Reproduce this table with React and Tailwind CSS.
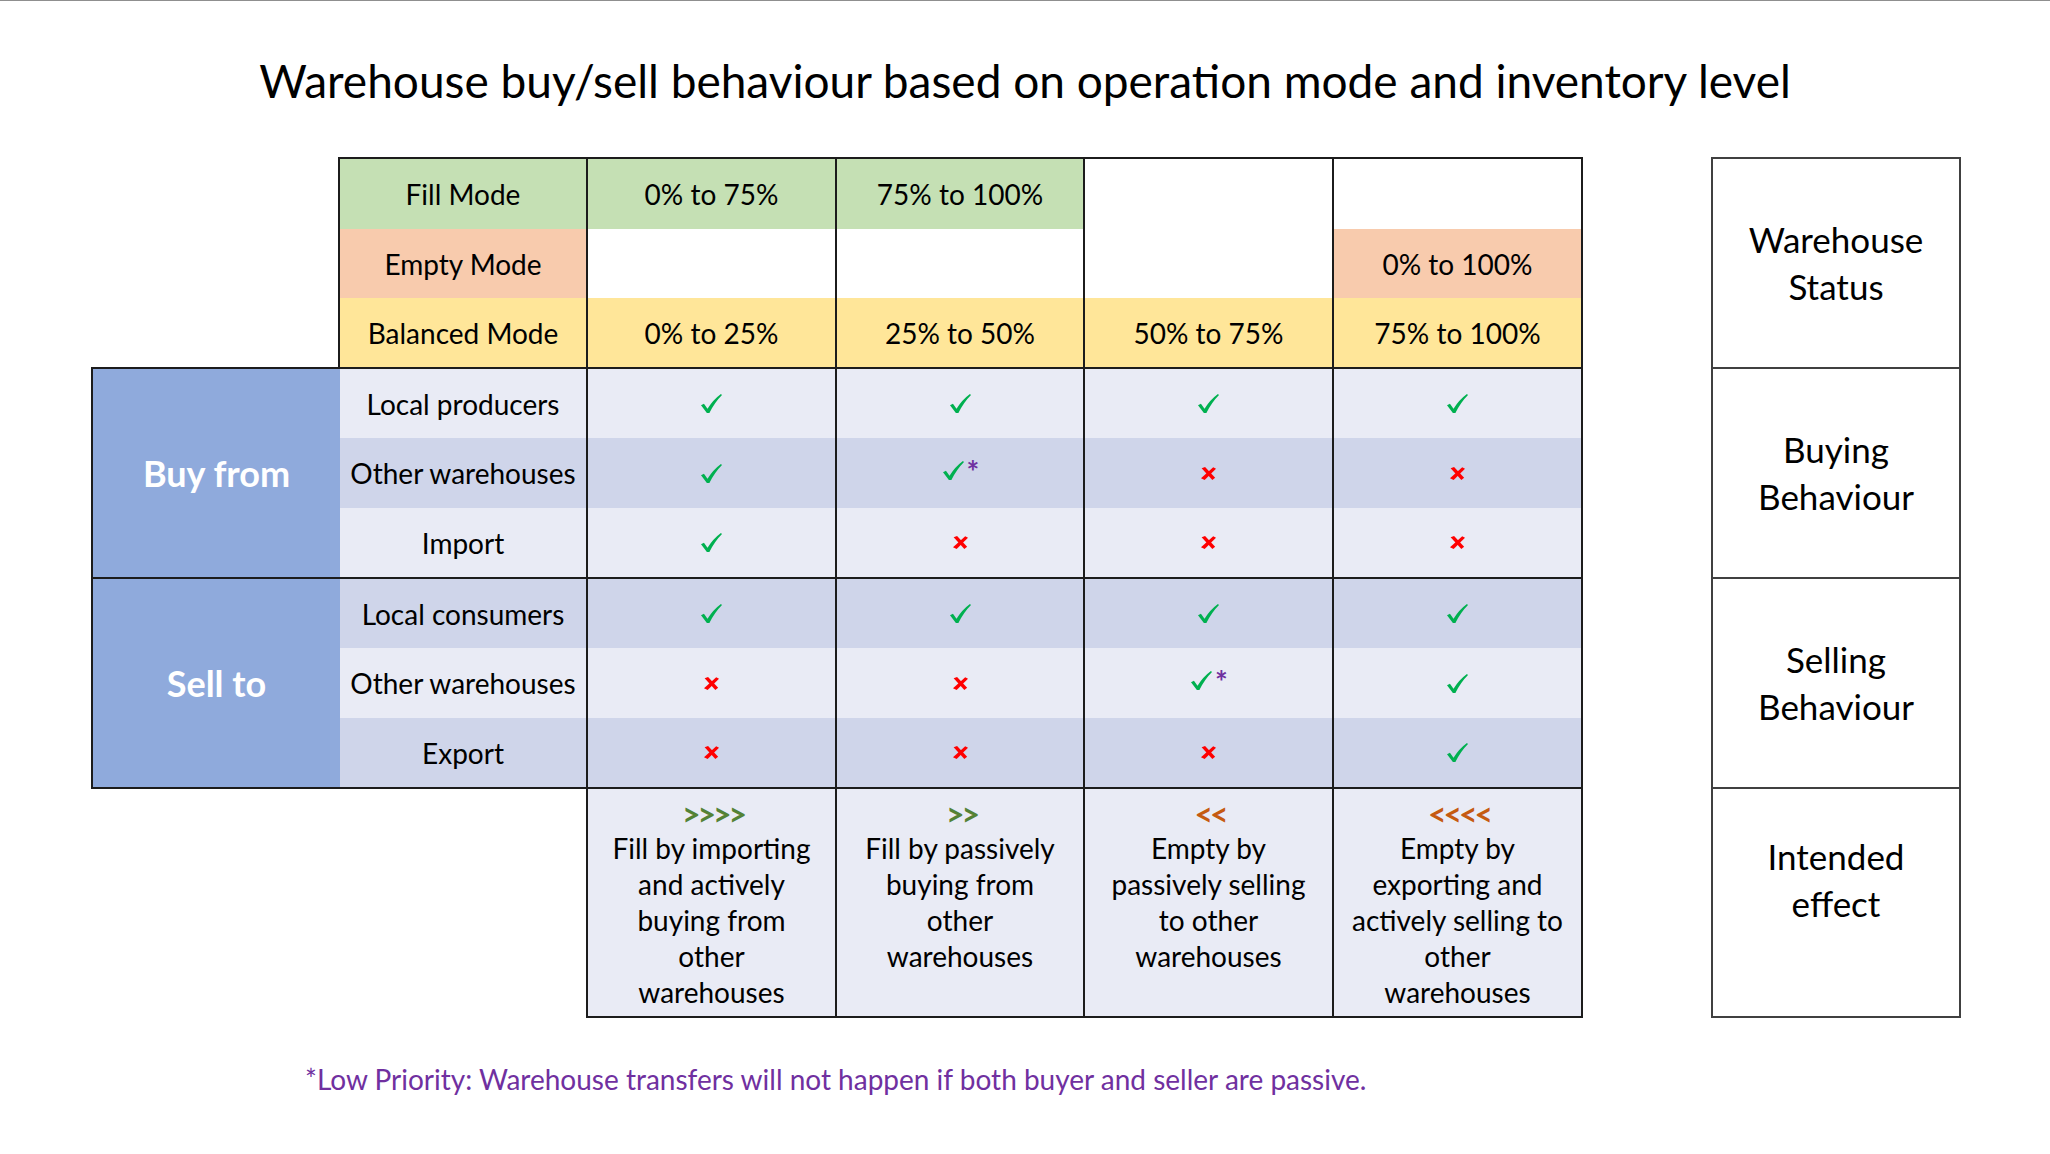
const cols = ['w-[248px] border-r-2', 'w-[249px] border-r-2', 'w-[248px] border-r-2', 'w-[249px] border-r-2', 'w-[247px]']

const header = [
  {
    label: 'Fill Mode',
    h: 'h-[70px]',
    bg: 'bg-[#C5E0B4]',
    cells: [
      ['0% to 75%', 'bg-[#C5E0B4]'],
      ['75% to 100%', 'bg-[#C5E0B4]'],
      ['', 'bg-white'],
      ['', 'bg-white'],
    ],
  },
  {
    label: 'Empty Mode',
    h: 'h-[69px]',
    bg: 'bg-[#F8CBAD]',
    cells: [
      ['', 'bg-white'],
      ['', 'bg-white'],
      ['', 'bg-white'],
      ['0% to 100%', 'bg-[#F8CBAD]'],
    ],
  },
  {
    label: 'Balanced Mode',
    h: 'h-[69px]',
    bg: 'bg-[#FFE699]',
    cells: [
      ['0% to 25%', 'bg-[#FFE699]'],
      ['25% to 50%', 'bg-[#FFE699]'],
      ['50% to 75%', 'bg-[#FFE699]'],
      ['75% to 100%', 'bg-[#FFE699]'],
    ],
  },
]

const groups = [
  {
    title: 'Buy from',
    rows: [
      { label: 'Local producers', marks: ['y', 'y', 'y', 'y'], bg: 'bg-[#E9EBF5]', h: 'h-[69px]' },
      { label: 'Other warehouses', marks: ['y', 'p', 'n', 'n'], bg: 'bg-[#CFD5EA]', h: 'h-[70px]' },
      { label: 'Import', marks: ['y', 'n', 'n', 'n'], bg: 'bg-[#E9EBF5]', h: 'h-[69px]' },
    ],
  },
  {
    title: 'Sell to',
    rows: [
      { label: 'Local consumers', marks: ['y', 'y', 'y', 'y'], bg: 'bg-[#CFD5EA]', h: 'h-[69px]' },
      { label: 'Other warehouses', marks: ['n', 'n', 'p', 'y'], bg: 'bg-[#E9EBF5]', h: 'h-[70px]' },
      { label: 'Export', marks: ['n', 'n', 'n', 'y'], bg: 'bg-[#CFD5EA]', h: 'h-[69px]' },
    ],
  },
]

const effects = [
  { arrows: '>>>>', color: 'text-[#548235]', lines: ['Fill by importing', 'and actively', 'buying from', 'other', 'warehouses'] },
  { arrows: '>>', color: 'text-[#548235]', lines: ['Fill by passively', 'buying from', 'other', 'warehouses'] },
  { arrows: '<<', color: 'text-[#C55A11]', lines: ['Empty by', 'passively selling', 'to other', 'warehouses'] },
  { arrows: '<<<<', color: 'text-[#C55A11]', lines: ['Empty by', 'exporting and', 'actively selling to', 'other', 'warehouses'] },
]

function Check() {
  return (
    <svg width="21" height="19" viewBox="0 0 20 18" className="block">
      <path d="M0 10.6 L2.8 9.2 L6.2 14 Q11.5 5.5 19 0 L20 1 Q13.4 7.6 8 18 L5.6 18 Z" fill="#00B050" />
    </svg>
  )
}

function Cross() {
  return (
    <svg width="15" height="13" viewBox="0 0 14 12" className="block">
      <path d="M0.6 1.2 L3.8 0 L13.2 10 L10.6 12 Z" fill="#FF0000" />
      <path d="M11.4 0.2 L14 1.6 L3.4 12 L0 10.4 Z" fill="#FF0000" />
    </svg>
  )
}

function Mark({ v }) {
  if (v === 'y') return <Check />
  if (v === 'n') return <Cross />
  return (
    <span className="flex items-start pl-[2px]">
      <Check />
      <span className="ml-[3px] -mt-[4px] text-[30px] font-bold leading-[28px] text-[#7030A0]">*</span>
    </span>
  )
}

function Group({ group, last }) {
  return (
    <div className={`flex w-[1492px] border-2 border-[#1c1c1c] ${last ? 'border-t-0' : ''}`}>
      <div className="flex w-[247px] items-center justify-center bg-[#8FAADC] text-[36px] font-bold text-white">
        {group.title}
      </div>
      <div className="flex flex-col">
        {group.rows.map((row) => (
          <div key={row.label} className={`flex ${row.h} ${row.bg}`}>
            <div className={`${cols[0]} flex items-center justify-center border-[#1c1c1c]`}>{row.label}</div>
            {row.marks.map((m, i) => (
              <div key={i} className={`${cols[i + 1]} flex items-center justify-center border-[#1c1c1c]`}>
                <Mark v={m} />
              </div>
            ))}
          </div>
        ))}
      </div>
    </div>
  )
}

export default function App() {
  return (
    <div className="h-[1154px] w-[2050px] border-t border-[#8f8f8f] bg-white pt-[52px] font-[family-name:Lato,sans-serif] text-black">
      <h1 className="text-center text-[46px] leading-[56px]">
        Warehouse buy/sell behaviour based on operation mode and inventory level
      </h1>

      <div className="mt-[48px] flex items-start pl-[91px]">
        <div className="flex flex-col text-[28px]">
          <div className="ml-[247px] flex w-[1245px] flex-col border-2 border-b-0 border-[#1c1c1c]">
            {header.map((row) => (
              <div key={row.label} className={`flex ${row.h}`}>
                <div className={`${cols[0]} ${row.bg} flex items-center justify-center border-[#1c1c1c]`}>{row.label}</div>
                {row.cells.map(([text, bg], i) => (
                  <div key={i} className={`${cols[i + 1]} ${bg} flex items-center justify-center border-[#1c1c1c]`}>
                    {text}
                  </div>
                ))}
              </div>
            ))}
          </div>

          {groups.map((g, i) => (
            <Group key={g.title} group={g} last={i === 1} />
          ))}

          <div className="ml-[495px] flex h-[229px] w-[997px] border-2 border-t-0 border-[#1c1c1c] bg-[#E9EBF5]">
            {effects.map((e, i) => (
              <div key={i} className={`${cols[i + 1]} flex flex-col items-center border-[#1c1c1c] pt-[9px] text-center`}>
                <div className={`h-[32px] pl-[3px] text-[32px] font-bold leading-[32px] tracking-[-3px] ${e.color}`}>
                  {e.arrows}
                </div>
                {e.lines.map((l) => (
                  <div key={l} className="whitespace-nowrap leading-[36px]">
                    {l}
                  </div>
                ))}
              </div>
            ))}
          </div>

          <p className="mt-[45px] ml-[214px] text-[28px] leading-[32px] text-[#7030A0]">
            *Low Priority: Warehouse transfers will not happen if both buyer and seller are passive.
          </p>
        </div>

        <div className="ml-[128px] flex w-[250px] flex-col border-2 border-[#404040] text-center text-[35px] leading-[47px]">
          <div className="flex h-[210px] items-center justify-center border-b-2 border-[#404040]">
            Warehouse<br />Status
          </div>
          <div className="flex h-[210px] items-center justify-center border-b-2 border-[#404040]">
            Buying<br />Behaviour
          </div>
          <div className="flex h-[210px] items-center justify-center border-b-2 border-[#404040]">
            Selling<br />Behaviour
          </div>
          <div className="flex h-[227px] items-center justify-center pb-[46px]">
            Intended<br />effect
          </div>
        </div>
      </div>
    </div>
  )
}
